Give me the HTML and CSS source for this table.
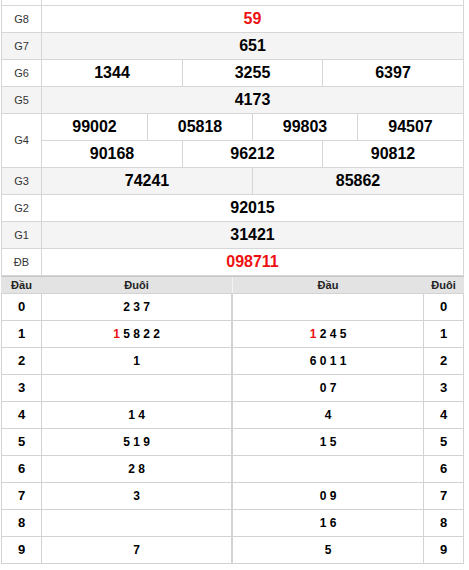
FILE: index.html
```html
<!DOCTYPE html>
<html lang="vi">
<head>
<meta charset="utf-8">
<title>Kết quả xổ số</title>
<link rel="stylesheet" href="styles.css">
</head>
<body>
<div class="sheet">
  <div class="board">
    <div class="row stub"><div class="lab"></div><div class="val"></div></div>
    <div class="row"><div class="lab">G8</div><div class="val red">59</div></div>
    <div class="row alt"><div class="lab">G7</div><div class="val">651</div></div>
    <div class="row"><div class="lab">G6</div><div class="val grid c3"><span>1344</span><span>3255</span><span>6397</span></div></div>
    <div class="row alt"><div class="lab">G5</div><div class="val">4173</div></div>
    <div class="row tall"><div class="lab">G4</div>
      <div class="val stack">
        <div class="grid c4"><span>99002</span><span>05818</span><span>99803</span><span>94507</span></div>
        <div class="grid c3"><span>90168</span><span>96212</span><span>90812</span></div>
      </div>
    </div>
    <div class="row alt"><div class="lab">G3</div><div class="val grid c2"><span>74241</span><span>85862</span></div></div>
    <div class="row"><div class="lab">G2</div><div class="val">92015</div></div>
    <div class="row alt"><div class="lab">G1</div><div class="val">31421</div></div>
    <div class="row"><div class="lab">ĐB</div><div class="val red">098711</div></div>
  </div>

  <div class="loto">
    <div class="lt left">
      <div class="lhead"><span>Đầu</span><span>Đuôi</span></div>
      <div class="lrow"><span class="k">0</span><span>2 3 7</span></div>
      <div class="lrow"><span class="k">1</span><span><i class="r">1</i> 5 8 2 2</span></div>
      <div class="lrow"><span class="k">2</span><span>1</span></div>
      <div class="lrow"><span class="k">3</span><span></span></div>
      <div class="lrow"><span class="k">4</span><span>1 4</span></div>
      <div class="lrow"><span class="k">5</span><span>5 1 9</span></div>
      <div class="lrow"><span class="k">6</span><span>2 8</span></div>
      <div class="lrow"><span class="k">7</span><span>3</span></div>
      <div class="lrow"><span class="k">8</span><span></span></div>
      <div class="lrow"><span class="k">9</span><span>7</span></div>
    </div>
    <div class="lt right">
      <div class="lhead"><span>Đầu</span><span>Đuôi</span></div>
      <div class="lrow"><span></span><span class="k">0</span></div>
      <div class="lrow"><span><i class="r">1</i> 2 4 5</span><span class="k">1</span></div>
      <div class="lrow"><span>6 0 1 1</span><span class="k">2</span></div>
      <div class="lrow"><span>0 7</span><span class="k">3</span></div>
      <div class="lrow"><span>4</span><span class="k">4</span></div>
      <div class="lrow"><span>1 5</span><span class="k">5</span></div>
      <div class="lrow"><span></span><span class="k">6</span></div>
      <div class="lrow"><span>0 9</span><span class="k">7</span></div>
      <div class="lrow"><span>1 6</span><span class="k">8</span></div>
      <div class="lrow"><span>5</span><span class="k">9</span></div>
    </div>
  </div>
</div>
</body>
</html>
```

FILE: styles.css
```css
* { box-sizing: border-box; }
body {
  margin: 0;
  background: #fff;
  font-family: "Liberation Sans", Arial, sans-serif;
  color: #000;
}
.sheet {
  margin-left: 1px;
  width: 463px;
}

/* prize board */
.board {
  display: flex;
  flex-direction: column;
  gap: 1px;
  background: #d6d6d6;
  padding: 0 1px 1px;
}
.row {
  display: grid;
  grid-template-columns: 39px 421px;
  column-gap: 1px;
  height: 26px;
}
.row.stub { height: 5px; }
.row.tall { height: 53px; }
.row > div { background: #fff; }
.row.alt > div,
.row.alt .grid span { background: #f4f4f4; }

.lab {
  font-size: 11px;
  color: #333;
  text-align: center;
  line-height: 26px;
}
.row.tall .lab { line-height: 53px; }
.val {
  font-size: 16px;
  font-weight: bold;
  text-align: center;
  line-height: 26px;
}
.val.red { color: #ee1111; }

.row > .val.grid,
.row > .val.stack,
.grid { background: #d6d6d6; }
.grid {
  display: grid;
  column-gap: 1px;
  height: 26px;
}
.grid span { background: #fff; display: block; }
.c2 { grid-template-columns: 210px 210px; }
.c3 { grid-template-columns: 140px 139px 140px; }
.c4 { grid-template-columns: 105px 104px 104px 105px; }
.stack {
  display: flex;
  flex-direction: column;
  gap: 1px;
}

/* loto tables */
.loto { display: flex; }
.lt {
  display: flex;
  flex-direction: column;
  gap: 1px;
  background: #d3d3d3;
  padding: 0 1px 1px;
}
.lt.left { width: 231px; }
.lt.right { width: 232px; }
.lhead {
  display: grid;
  column-gap: 1px;
  height: 17px;
  margin: 0 -1px;
  padding: 0 1px;
  background: #e3e3e3;
  border-top: 1px solid #c6c6c6;
  font-size: 11px;
  font-weight: bold;
  color: #222;
  line-height: 16px;
  text-align: center;
}
.right .lhead { box-shadow: inset 1px 0 #f2f2f2; }
.lrow {
  display: grid;
  column-gap: 1px;
  height: 26px;
}
.left .lhead, .left .lrow { grid-template-columns: 39px 189px; }
.right .lhead, .right .lrow { grid-template-columns: 190px 39px; }
.lrow span {
  display: block;
  background: #fff;
  text-align: center;
  line-height: 26px;
  font-size: 12px;
  font-weight: bold;
  white-space: pre;
}
.lrow .k { font-size: 13px; }
.r { font-style: normal; color: #ee1111; }
```
